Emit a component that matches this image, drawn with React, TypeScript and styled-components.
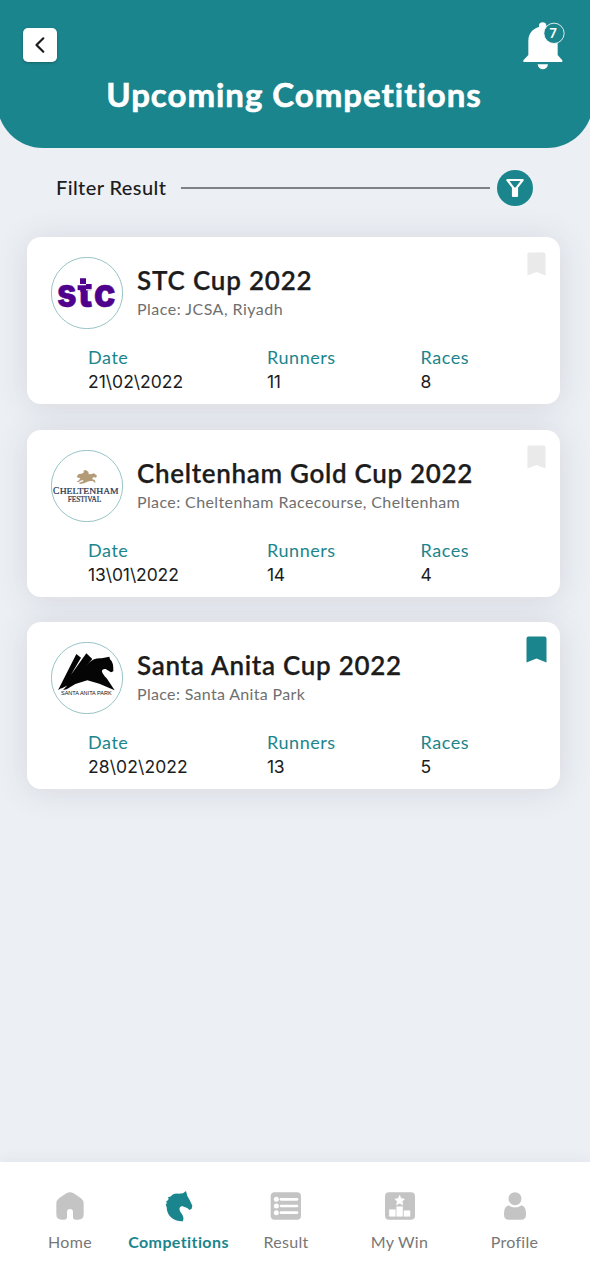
import React from "react";
import styled, { createGlobalStyle } from "styled-components";

const teal = "#1b858d";

const GlobalStyle = createGlobalStyle`
  * { box-sizing: border-box; }
  body {
    margin: 0;
    background: #eceff4;
    font-family: Lato, "Open Sans", sans-serif;
    color: #1c1c1c;
  }
`;

const Screen = styled.div`
  width: 590px;
  height: 1280px;
  display: flex;
  flex-direction: column;
  overflow: hidden;
  background: #eceff4;
`;

const Header = styled.header`
  flex: none;
  height: 148px;
  margin: 0 -3px;
  padding: 21px 28px 0 26px;
  border-radius: 0 0 46px 46px;
  background: ${teal};
`;

const HeaderBar = styled.div`
  display: flex;
  justify-content: space-between;
  align-items: flex-start;
  height: 53px;
`;

const BackButton = styled.button`
  width: 34px;
  height: 34px;
  margin: 7px 0 0;
  padding: 0;
  border: 0;
  border-radius: 5px;
  background: #fff;
  box-shadow: 0 1px 3px rgba(0, 0, 0, 0.25);
  svg { display: block; }
`;

const Title = styled.h1`
  margin: 0;
  text-align: center;
  font-size: 33px;
  line-height: 40px;
  font-weight: 700;
  color: #fff;
  letter-spacing: 0.98px;
  -webkit-text-stroke: 0.6px #fff;
`;

const FilterRow = styled.div`
  flex: none;
  display: flex;
  align-items: center;
  height: 36px;
  margin: 22px 57px 0 56px;
`;

const FilterLabel = styled.span`
  width: 110px;
  margin-top: -2px;
  font-size: 20px;
  line-height: 24px;
  font-weight: 500;
  white-space: nowrap;
  letter-spacing: 0.4px;
`;

const Rule = styled.div`
  flex: 1;
  height: 1.5px;
  margin: 0 7px 0 15px;
  background: #7e8285;
`;

const FilterButton = styled.button`
  width: 36px;
  height: 36px;
  padding: 0;
  border: 0;
  border-radius: 50%;
  background: ${teal};
  svg { display: block; }
`;

const CardList = styled.main`
  flex: 1;
  display: flex;
  flex-direction: column;
  gap: 25.5px;
  padding: 31px 30px 0 27px;
`;

const Card = styled.article`
  height: 167px;
  border-radius: 14px;
  background: #fff;
  box-shadow: 0 2px 32px rgba(60, 65, 80, 0.13);
`;

const CardTop = styled.div`
  display: flex;
  height: 108px;
  padding: 20px 14px 0 23.5px;
`;

const CardText = styled.div`
  flex: 1;
  padding: 7px 0 0 14.5px;
  white-space: nowrap;
`;

const CardTitle = styled.h2<{ $track: number }>`
  margin: 0 0 3px;
  font-size: 26px;
  line-height: 32px;
  font-weight: 600;
  letter-spacing: ${(p) => p.$track}px;
  -webkit-text-stroke: 0.25px currentColor;
`;

const Place = styled.p<{ $track: number }>`
  margin: 0;
  font-size: 16px;
  line-height: 20px;
  color: #6f6f6f;
  letter-spacing: ${(p) => p.$track}px;
`;

const BookmarkIcon = styled.svg<{ $on?: boolean }>`
  flex: none;
  width: ${(p) => (p.$on ? 21 : 19)}px;
  height: ${(p) => (p.$on ? 27 : 24)}px;
  margin-top: ${(p) => (p.$on ? -6 : -5)}px;
  margin-right: ${(p) => (p.$on ? -1 : 0)}px;
  fill: ${(p) => (p.$on ? teal : "#eaeaea")};
`;

const Stats = styled.dl`
  display: grid;
  grid-template-columns: 179px 153.5px 1fr;
  margin: 0;
  padding-left: 61px;
  font-size: 18px;
  line-height: 24px;
`;

const StatName = styled.dt`
  color: ${teal};
  letter-spacing: 0.55px;
`;

const StatValue = styled.dd<{ $track?: number }>`
  margin: 1px 0 0;
  font-family: Inter, Lato, sans-serif;
  font-size: 17.5px;
  letter-spacing: ${(p) => p.$track ?? -0.4}px;
`;

const Nav = styled.nav`
  flex: none;
  display: grid;
  grid-template-columns: 108px 109px 106px 121px 109px;
  height: 118px;
  padding: 28px 0 0 16px;
  background: #fff;
  box-shadow: 0 -2px 14px rgba(60, 65, 80, 0.06);
`;

const NavItem = styled.a<{ $active?: boolean }>`
  display: flex;
  flex-direction: column;
  align-items: center;
  font-size: 16px;
  line-height: 20px;
  white-space: nowrap;
  font-weight: ${(p) => (p.$active ? 700 : 400)};
  color: ${(p) => (p.$active ? teal : "#777")};
  letter-spacing: ${(p) => (p.$active ? 0.4 : 0.3)}px;
  svg {
    width: 34px;
    height: 32px;
    margin-bottom: 10px;
    fill: ${(p) => (p.$active ? teal : "#c4c4c4")};
  }
`;

const Emblem = styled.svg`
  flex: none;
  width: 72px;
  height: 72px;
`;

const Ring = () => (
  <circle cx="126" cy="128" r="107" fill="#fff" stroke="#7fb5b8" strokeWidth="2.4" />
);

const StcLogo = () => (
  <Emblem viewBox="18 20 216 216">
    <Ring />
    <g fill="#4f008c" stroke="#4f008c" strokeWidth="1.5" fontFamily="Inter, sans-serif" fontWeight="800" fontSize="118">
      <text x="36" y="171" textLength="59" lengthAdjust="spacingAndGlyphs">s</text>
      <text x="98" y="171" textLength="44" lengthAdjust="spacingAndGlyphs">t</text>
      <text x="146" y="171" textLength="66" lengthAdjust="spacingAndGlyphs">c</text>
    </g>
    <path d="M97 76h47v44H97z" fill="#fff" />
    <path d="M105 84h18v17h-18zM123 101h17v16h-17zM98 105h10v14H98zM106 105h17v20h-17z" fill="#4f008c" />
  </Emblem>
);

const CheltenhamLogo = () => (
  <Emblem viewBox="18 20 216 216">
    <Ring />
    <path
      d="M95 100l6-8 9-1 7-4-2-5 7-2 8 5 1 7 6 1 10-3 9 7-3 6-7-2-5 6 8 3 3 8-5-1-3-4-9 0-8 2-10 5-13 2-1-4 12-4-1-4-8 2-5 5-6-2 7-4 4-7-7-1z"
      fill="#b39b78"
    />
    <g fontFamily="Liberation Serif, serif" fill="#26344d" stroke="#26344d" strokeWidth=".6">
      <text x="24" y="152" fontSize="29" textLength="19" lengthAdjust="spacingAndGlyphs">C</text>
      <text x="44" y="152" fontSize="25" textLength="177" lengthAdjust="spacingAndGlyphs">HELTENHAM</text>
      <text x="68" y="176" fontSize="22" textLength="101" lengthAdjust="spacingAndGlyphs">FESTIVAL</text>
    </g>
  </Emblem>
);

const SantaAnitaLogo = () => (
  <Emblem viewBox="18 20 216 216">
    <Ring />
    <path d="M39 165L94 56l14 11-50 85zM48 160l76-106 18 17-72 78zM54 164l78-82q16-15 38-13l23-5 2 8q11 8 10 36l-7 3-16-10q-12-1-11 8 2 7 14 20l24 36-46-20-36-10-36 11-26 16z" fill="#050505" />
    <text x="48" y="180" fontFamily="Liberation Sans, sans-serif" fontSize="16" fill="#111" textLength="152" lengthAdjust="spacingAndGlyphs">
      SANTA ANITA PARK
    </text>
  </Emblem>
);

const Bell = () => (
  <svg width="42" height="49.3" viewBox="684 62 126 148">
    <path d="M732 80v-5c0-12 22-12 22 0v5c20 6 34 20 34 42v42l14 16v5H685v-5l15-16v-42c0-22 12-36 32-42zM728 192h31c-2 20-29 20-31 0z" fill="#fff" />
    <circle cx="777" cy="99" r="30.5" fill={teal} stroke="#fff" strokeWidth="2.5" />
    <text x="774" y="112" textAnchor="middle" fontSize="39" fontWeight="700" fill="#fff">7</text>
  </svg>
);

const HomeIcon = () => (
  <svg viewBox="161 119 102 96">
    <path d="M201 129q11-7 22 0l22 15q8 6 8 16v32q0 16-16 16h-9q-7 0-7-7v-16q0-9-9-9t-9 9v16q0 7-7 7h-9q-16 0-16-16v-32q0-10 8-16z" />
  </svg>
);

const HorseIcon = () => (
  <svg viewBox="486 119 102 96">
    <path d="M549 213C520 214 500 196 500 170L497 163Q500 162 500 158L499 152Q504 152 506 145L504 140Q512 141 517 133Q526 129 535 130L549 129L558 122L562 137L569 149L577 166L575 175L568 179L562 173L551 169C541 165 535 174 541 184L548 195Q553 204 549 213Z" />
  </svg>
);

const ResultIcon = () => (
  <svg viewBox="810 119 102 96">
    <rect x="815" y="126" width="91" height="82" rx="12" />
    <g fill="#fff">
      <circle cx="832" cy="147" r="7.5" /><circle cx="832" cy="167" r="7.5" /><circle cx="832" cy="187" r="7.5" />
      <rect x="842" y="143" width="56" height="8" rx="4" />
      <rect x="842" y="163" width="56" height="8" rx="4" />
      <rect x="842" y="183" width="56" height="8" rx="4" />
    </g>
  </svg>
);

const WinIcon = () => (
  <svg viewBox="263 119 102 96">
    <rect x="269" y="126" width="90" height="82" rx="12" />
    <path
      d="M313 135l4.500 9.500 10 1.500-7 7.500 2 10.500-9.500-5-9.500 5 2-10.500-7-7.500 10-1.500zM282 178h18v20h-18zM304 169h18v29h-18zM326 181h18v17h-18z"
      fill="#fff" stroke="#fff" strokeWidth="1.500" strokeLinejoin="round"
    />
  </svg>
);

const ProfileIcon = () => (
  <svg viewBox="609 119 102 96">
    <circle cx="660" cy="145" r="19.500" />
    <path d="M640 165q20 13 40 0 13 5 13 24v4q0 15-15 15h-36q-15 0-15-15v-4q0-19 13-24z" />
  </svg>
);

const competitions = [
  { name: "STC Cup 2022", nameTrack: 0.8, place: "JCSA, Riyadh", placeTrack: 0.48, date: "21\\02\\2022", dateTrack: 0, runners: 11, races: 8, saved: false, Logo: StcLogo },
  { name: "Cheltenham Gold Cup 2022", nameTrack: 0.68, place: "Cheltenham Racecourse, Cheltenham", placeTrack: 0.39, date: "13\\01\\2022", dateTrack: -0.1, runners: 14, races: 4, saved: false, Logo: CheltenhamLogo },
  { name: "Santa Anita Cup 2022", nameTrack: 0.71, place: "Santa Anita Park", placeTrack: 0.33, date: "28\\02\\2022", dateTrack: 0.1, runners: 13, races: 5, saved: true, Logo: SantaAnitaLogo },
];

export default function App() {
  return (
    <>
      <GlobalStyle />
      <Screen>
        <Header>
          <HeaderBar>
            <BackButton aria-label="Back">
              <svg width="34" height="34" viewBox="0 0 34 34" fill="none" stroke="#1c1c1c" strokeWidth="2.200" strokeLinecap="round" strokeLinejoin="round">
                <path d="M20.300 10.300L13.500 17l6.800 6.700" />
              </svg>
            </BackButton>
            <Bell />
          </HeaderBar>
          <Title>Upcoming Competitions</Title>
        </Header>
        <FilterRow>
          <FilterLabel>Filter Result</FilterLabel>
          <Rule />
          <FilterButton aria-label="Filter">
            <svg width="36" height="36" viewBox="605 510 108 108" fill="none" stroke="#fff" strokeWidth="6.500" strokeLinejoin="round">
              <path d="M636 540h46l-17 22v26h-12v-26z" />
              <path d="M659 562v26" />
            </svg>
          </FilterButton>
        </FilterRow>
        <CardList>
          {competitions.map(({ Logo, ...c }) => (
            <Card key={c.name}>
              <CardTop>
                <Logo />
                <CardText>
                  <CardTitle $track={c.nameTrack}>{c.name}</CardTitle>
                  <Place $track={c.placeTrack}>Place: {c.place}</Place>
                </CardText>
                <BookmarkIcon $on={c.saved} viewBox="0 0 21 27" preserveAspectRatio="none">
                  <path d="M2.500 0.500h16q2 0 2 2V26.500L10.500 22.500 .5 26.500V2.500q0-2 2-2z" />
                </BookmarkIcon>
              </CardTop>
              <Stats>
                <StatName>Date</StatName>
                <StatName>Runners</StatName>
                <StatName>Races</StatName>
                <StatValue $track={c.dateTrack}>{c.date}</StatValue>
                <StatValue>{c.runners}</StatValue>
                <StatValue>{c.races}</StatValue>
              </Stats>
            </Card>
          ))}
        </CardList>
        <Nav>
          <NavItem><HomeIcon />Home</NavItem>
          <NavItem $active><HorseIcon />Competitions</NavItem>
          <NavItem><ResultIcon />Result</NavItem>
          <NavItem><WinIcon />My Win</NavItem>
          <NavItem><ProfileIcon />Profile</NavItem>
        </Nav>
      </Screen>
    </>
  );
}
